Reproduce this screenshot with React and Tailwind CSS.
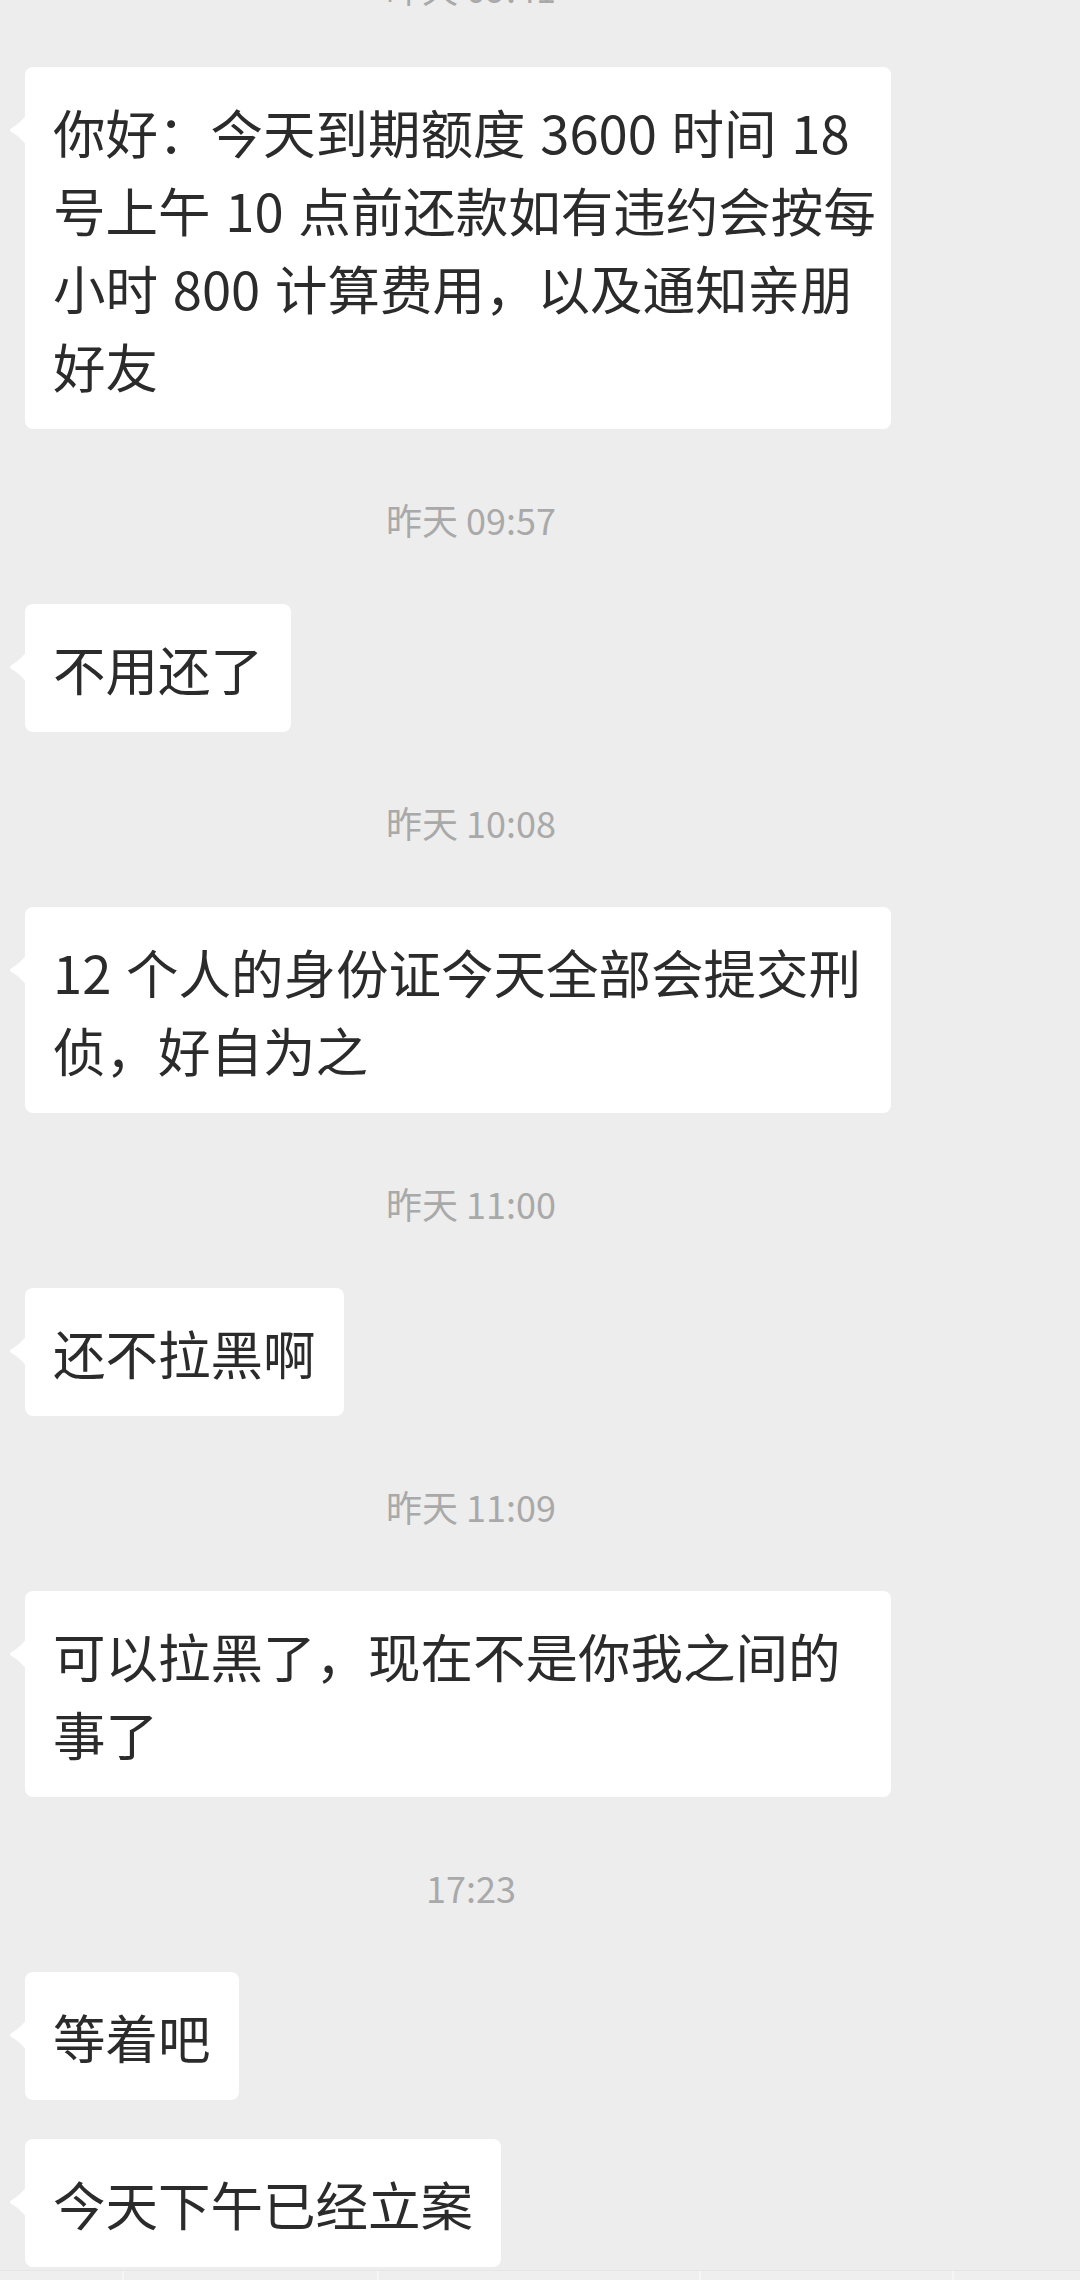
import React from "react";

function Tail() {
  return (
    <svg
      className="absolute left-[-16px] top-[48px]"
      width="17"
      height="30"
      viewBox="0 0 17 30"
    >
      <path
        d="M17 0 C14 5 7 10.5 2 13.3 Q0 15 2 16.7 C7 19.5 14 25 17 30 Z"
        fill="#ffffff"
      />
    </svg>
  );
}

function Bubble({ lines, wide, className = "" }) {
  return (
    <div
      className={
        "relative ml-[25px] bg-white rounded-[8px] px-[28px] py-[25px] text-[52.5px] leading-[78px] [word-spacing:3px] text-[#2b2b2b] " +
        (wide ? "w-[866px] " : "w-fit ") +
        className
      }
    >
      <Tail />
      {lines.map((l, i) => (
        <div key={i} className="whitespace-nowrap">
          {l}
        </div>
      ))}
    </div>
  );
}

function Stamp({ text, className = "" }) {
  return (
    <div
      className={
        "w-[942px] h-[50px] leading-[50px] text-center text-[36px] text-[#a9a9a9] shrink-0 " +
        className
      }
    >
      {text}
    </div>
  );
}

export default function App() {
  return (
    <div className="w-[1080px] h-[2280px] overflow-hidden bg-[#ededed] flex flex-col font-['Noto_Sans_CJK_SC','Noto_Sans',sans-serif]">
      <Stamp text="昨天 09:41" className="mt-[-38px]" />
      <Bubble
        className="mt-[55px]"
        wide
        lines={[
          "你好：今天到期额度 3600 时间 18",
          "号上午 10 点前还款如有违约会按每",
          "小时 800 计算费用，以及通知亲朋",
          "好友",
        ]}
      />
      <Stamp text="昨天 09:57" className="mt-[65px]" />
      <Bubble className="mt-[60px]" lines={["不用还了"]} />
      <Stamp text="昨天 10:08" className="mt-[65px]" />
      <Bubble
        className="mt-[60px]"
        wide
        lines={["12 个人的身份证今天全部会提交刑", "侦，好自为之"]}
      />
      <Stamp text="昨天 11:00" className="mt-[65px]" />
      <Bubble className="mt-[60px]" lines={["还不拉黑啊"]} />
      <Stamp text="昨天 11:09" className="mt-[65px]" />
      <Bubble
        className="mt-[60px]"
        wide
        lines={["可以拉黑了，现在不是你我之间的", "事了"]}
      />
      <Stamp text="17:23" className="mt-[65px]" />
      <Bubble className="mt-[60px]" lines={["等着吧"]} />
      <Bubble className="mt-[39px]" lines={["今天下午已经立案"]} />
      <div className="mt-auto h-[10px] shrink-0 border-t border-[#e6e6e6] bg-[#efefef] flex">
        <div className="w-[124px] border-r-2 border-[#f6f6f6]" />
        <div className="w-[255px] border-r-2 border-[#f6f6f6]" />
        <div className="w-[322px] border-r-2 border-[#f6f6f6]" />
        <div className="w-[253px] border-r-2 border-[#f6f6f6]" />
        <div className="flex-1" />
      </div>
    </div>
  );
}
